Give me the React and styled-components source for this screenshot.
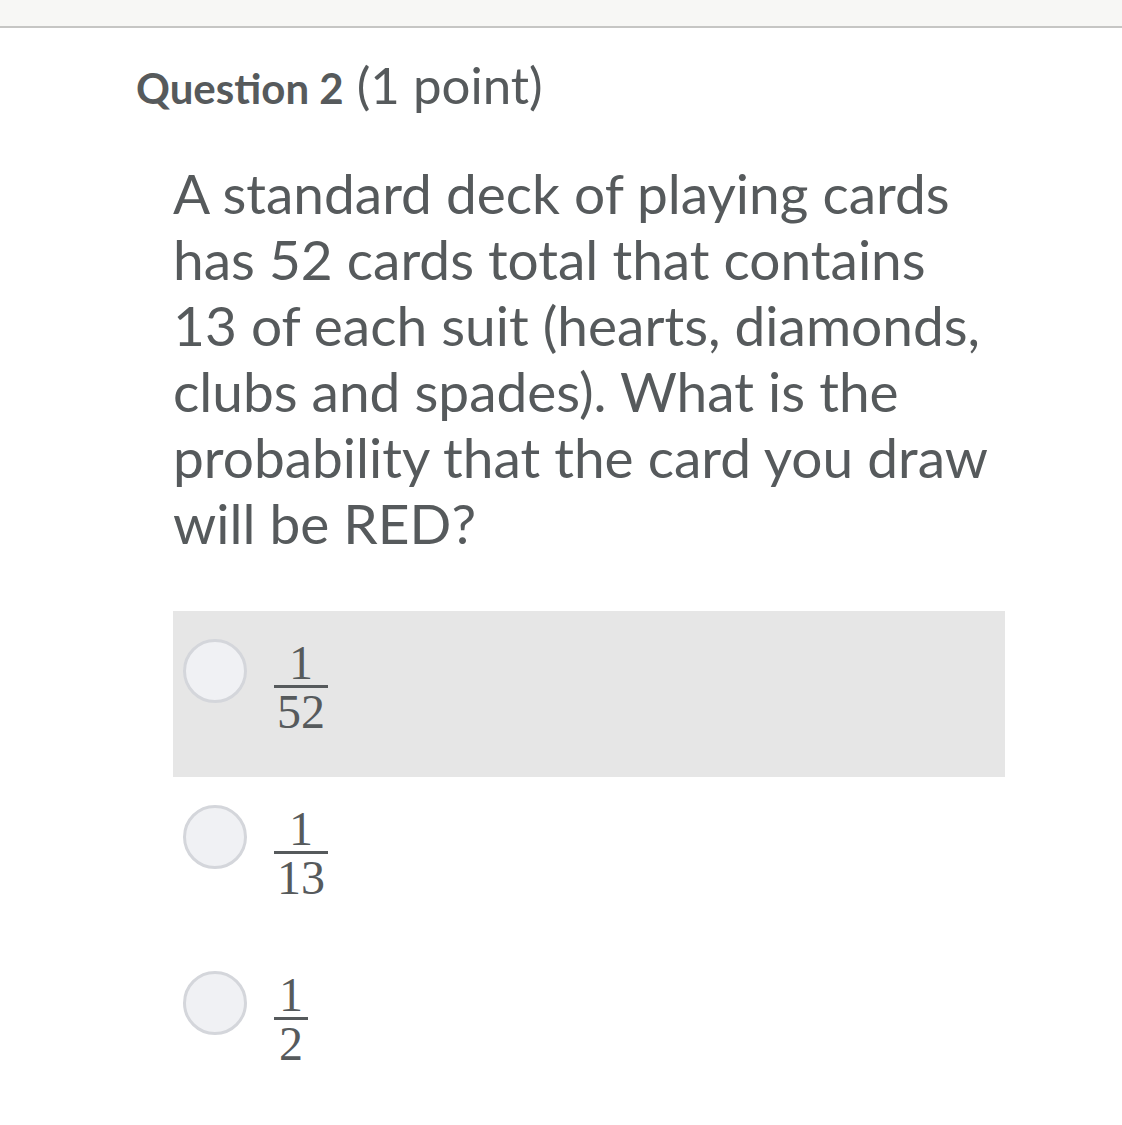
import styled, { createGlobalStyle } from "styled-components";

const GlobalStyle = createGlobalStyle`
  html, body {
    margin: 0;
    padding: 0;
    background: #ffffff;
  }
  body {
    font-family: Lato, "Liberation Sans", sans-serif;
    color: #565a5c;
  }
`;

const Page = styled.div`
  width: 1122px;
  min-height: 1125px;
  background: #ffffff;
`;

const TopBar = styled.div`
  height: 26px;
  background: #f7f7f5;
  border-bottom: 2px solid #c6c6c4;
`;

const Content = styled.div`
  padding: 29px 0 0 136px;
`;

const Title = styled.h2`
  margin: 0;
  font-size: 51px;
  line-height: 56px;
  font-weight: 400;
  color: #565a5c;
`;

const Strong = styled.span`
  font-weight: 700;
  font-size: 42px;
`;

const Body = styled.div`
  padding: 0 0 0 37px;
  width: 832px;
`;

const Prompt = styled.p`
  margin: 44px 0 0 0;
  font-size: 55px;
  line-height: 66px;
  color: #565a5c;
  white-space: nowrap;
`;

const Options = styled.div`
  margin-top: 55px;
  display: flex;
  flex-direction: column;
`;

const Option = styled.div`
  height: 166px;
  display: flex;
  align-items: center;
  gap: 27px;
  padding: 0 0 0 10px;
  background: ${(p) => (p.$hover ? "#e6e6e6" : "transparent")};
`;

const Radio = styled.span`
  width: 64px;
  height: 64px;
  margin-top: -46px;
  border-radius: 50%;
  box-sizing: border-box;
  border: 3px solid #d4d6db;
  background: #f0f1f4;
  flex: none;
`;

const Fraction = styled.span`
  display: inline-flex;
  flex-direction: column;
  align-items: center;
  margin-top: -14px;
  font-family: "Liberation Serif", "Times New Roman", serif;
  font-size: 48px;
  line-height: 40px;
  color: #565a5c;
`;

const Num = styled.span`
  padding: 0 5px 2px;
`;

const Den = styled.span`
  align-self: stretch;
  text-align: center;
  border-top: 3px solid #565a5c;
  padding: 4px 3px 0;
`;

const choices = [
  { den: "52", hover: true },
  { den: "13" },
  { den: "2" },
];

export default function App() {
  return (
    <Page>
      <GlobalStyle />
      <TopBar />
      <Content>
        <Title>
          <Strong>Question 2</Strong> (1 point)
        </Title>
        <Body>
          <Prompt>
            A standard deck of playing cards
            <br />
            has 52 cards total that contains
            <br />
            13 of each suit (hearts, diamonds,
            <br />
            clubs and spades). What is the
            <br />
            probability that the card you draw
            <br />
            will be RED?
          </Prompt>
          <Options>
            {choices.map((c) => (
              <Option key={c.den} $hover={c.hover}>
                <Radio />
                <Fraction>
                  <Num>1</Num>
                  <Den>{c.den}</Den>
                </Fraction>
              </Option>
            ))}
          </Options>
        </Body>
      </Content>
    </Page>
  );
}
